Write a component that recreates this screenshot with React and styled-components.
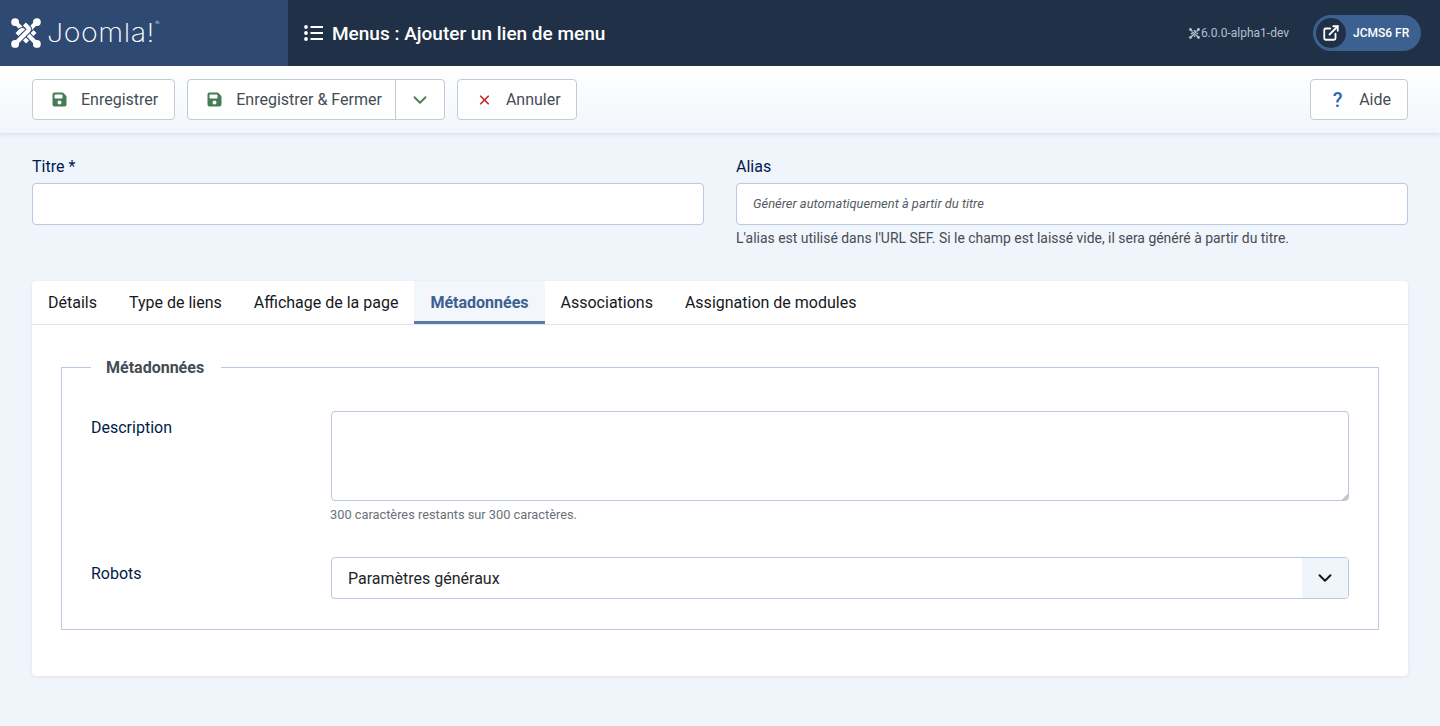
import React from 'react'
import styled, { createGlobalStyle } from 'styled-components'
import { ChevronDown, ExternalLink, X } from 'lucide-react'

const GlobalStyle = createGlobalStyle`
  html, body { margin: 0; padding: 0; }
  body {
    background: #f0f4fb;
    font-family: Roboto, "Liberation Sans", sans-serif;
    color: #22262a;
  }
  * { box-sizing: border-box; }
`

function JoomlaMark({ size = 30, color = '#fff', bg = '#2f4a72' }) {
  const hook = 'M-9.5 -9.5 L2.2 2.2 Q3.7 3.7 5.2 2.2 L9 -1.6'
  const hooks = [0, 90, 180, 270]
  return (
    <svg width={size} height={size} viewBox="0 0 30 30" fill="none">
      <g transform="translate(15 15)">
        {hooks.map((deg) => (
          <g key={deg} transform={`rotate(${deg})`}>
            <path d={hook} stroke={bg} strokeWidth="6.2" />
            <path d={hook} stroke={color} strokeWidth="4.2" />
            <circle cx="-10.9" cy="-10.9" r="3.9" fill={color} />
          </g>
        ))}
      </g>
    </svg>
  )
}

function FloppyIcon({ color }) {
  return (
    <svg width="15" height="15" viewBox="-16 16 480 480" fill={color}>
      <path d="M64 32C29 32 0 61 0 96v320c0 35 29 64 64 64h320c35 0 64-29 64-64V173c0-17-7-33-19-45l-77-77c-12-12-28-19-45-19H64zm0 96c0-18 14-32 32-32h192c18 0 32 14 32 32v64c0 18-14 32-32 32H96c-18 0-32-14-32-32v-64zm160 160a64 64 0 1 1 0 128 64 64 0 1 1 0-128z" />
    </svg>
  )
}

function ListIcon() {
  return (
    <svg width="20" height="16" viewBox="0 0 20 16" fill="#fff" stroke="#fff">
      <circle cx="2" cy="2" r="1.9" stroke="none" />
      <circle cx="2" cy="8" r="1.9" stroke="none" />
      <circle cx="2" cy="14" r="1.9" stroke="none" />
      <path d="M6.5 2H19M6.5 8H19M6.5 14H19" strokeWidth="2" />
    </svg>
  )
}

export default function App() {
  return (
    <>
      <GlobalStyle />
      <Header>
        <LogoBlock>
          <JoomlaMark />
          <LogoText>Joomla!<LogoReg>®</LogoReg></LogoText>
        </LogoBlock>
        <TitleBlock>
          <ListIcon />
          <PageTitle>Menus : Ajouter un lien de menu</PageTitle>
        </TitleBlock>
        <Version>
          <JoomlaMark size={11} color="#b6bfcb" bg="#1f3047" />
          6.0.0-alpha1-dev
        </Version>
        <SitePill>
          <PillCircle>
            <ExternalLink size={18} strokeWidth={2.4} color="#fff" />
          </PillCircle>
          <PillLabel>JCMS6 FR</PillLabel>
        </SitePill>
      </Header>

      <Toolbar>
        <ToolButton>
          <FloppyIcon color="#457d54" />
          Enregistrer
        </ToolButton>
        <SplitButton>
          <SplitMain>
            <FloppyIcon color="#457d54" />
            Enregistrer &amp; Fermer
          </SplitMain>
          <SplitToggle>
            <ChevronDown size={22} strokeWidth={2} color="#457d54" />
          </SplitToggle>
        </SplitButton>
        <CancelButton>
          <CancelIcon>
            <X size={22} strokeWidth={2.8} color="#c52827" />
          </CancelIcon>
          Annuler
        </CancelButton>
        <HelpButton>
          <HelpMark>?</HelpMark>
          Aide
        </HelpButton>
      </Toolbar>

      <Main>
        <TitleRow>
          <Field>
            <FieldLabel>Titre *</FieldLabel>
            <TextInput />
          </Field>
          <Field>
            <FieldLabel>Alias</FieldLabel>
            <TextInput placeholder="Générer automatiquement à partir du titre" />
            <Hint>L'alias est utilisé dans l'URL SEF. Si le champ est laissé vide, il sera généré à partir du titre.</Hint>
          </Field>
        </TitleRow>

        <Card>
          <Tabs>
            <Tab>Détails</Tab>
            <Tab>Type de liens</Tab>
            <Tab>Affichage de la page</Tab>
            <Tab $active>Métadonnées</Tab>
            <Tab>Associations</Tab>
            <Tab>Assignation de modules</Tab>
          </Tabs>
          <CardBody>
            <Fieldset>
              <Legend>Métadonnées</Legend>
              <FormRow>
                <RowLabel>Description</RowLabel>
                <RowControl>
                  <TextArea />
                  <Counter>300 caractères restants sur 300 caractères.</Counter>
                </RowControl>
              </FormRow>
              <FormRow>
                <RowLabel>Robots</RowLabel>
                <RowControl>
                  <SelectBox>
                    <SelectValue>Paramètres généraux</SelectValue>
                    <SelectArrow>
                      <ChevronDown size={22} strokeWidth={2.2} color="#16191d" />
                    </SelectArrow>
                  </SelectBox>
                </RowControl>
              </FormRow>
            </Fieldset>
          </CardBody>
        </Card>
      </Main>
    </>
  )
}

const Header = styled.header`
  display: flex;
  align-items: center;
  height: 66px;
  background: #1f3047;
  padding-right: 19px;
`

const LogoBlock = styled.div`
  display: flex;
  align-items: center;
  gap: 6px;
  width: 288px;
  height: 100%;
  padding-left: 11px;
  background: #2f4a72;
`

const LogoText = styled.span`
  position: relative;
  color: #fff;
  font-family: Inter, Lato, sans-serif;
  font-weight: 200;
  font-size: 26px;
  letter-spacing: 0.5px;
  line-height: 1;
  transform: scaleX(1.1);
  transform-origin: left center;
`

const LogoReg = styled.sup`
  position: absolute;
  top: 0;
  margin-left: 0;
  font-size: 6px;
  letter-spacing: 0;
  line-height: 1;
`

const TitleBlock = styled.div`
  display: flex;
  align-items: center;
  gap: 8px;
  flex: 1;
  padding-left: 16px;
`

const PageTitle = styled.h1`
  margin: 0;
  color: #fff;
  font-size: 19px;
  font-weight: 500;
`

const Version = styled.div`
  display: flex;
  align-items: center;
  gap: 1px;
  margin-right: 24px;
  color: #b6bfcb;
  font-size: 12px;
`

const SitePill = styled.div`
  display: flex;
  align-items: center;
  gap: 7px;
  width: 108px;
  height: 36px;
  padding-left: 3px;
  border-radius: 18px;
  background: #3c6090;
`

const PillCircle = styled.span`
  display: flex;
  align-items: center;
  justify-content: center;
  width: 30px;
  height: 30px;
  border-radius: 50%;
  background: #1f3047;
`

const PillLabel = styled.span`
  color: #fff;
  font-size: 12px;
  font-weight: 500;
`

const Toolbar = styled.div`
  display: flex;
  align-items: center;
  gap: 12px;
  height: 67px;
  padding: 0 32px;
  background: linear-gradient(180deg, #fff 0%, #f2f5fb 100%);
  box-shadow: 0 1px 4px rgba(90, 110, 150, 0.18);
`

const ToolButton = styled.button`
  display: flex;
  align-items: center;
  gap: 14px;
  height: 41px;
  padding: 0 16px 0 19px;
  border: 1px solid #c2cbd8;
  border-radius: 4px;
  background: #fff;
  color: #454c55;
  font-family: inherit;
  font-size: 16px;
`

const CancelButton = styled(ToolButton)`
  padding-right: 15px;
`

const CancelIcon = styled.span`
  display: flex;
  justify-content: center;
  width: 15px;
`

const HelpButton = styled(ToolButton)`
  margin-left: auto;
`

const HelpMark = styled.span`
  width: 15px;
  color: #2a69b8;
  font-size: 20px;
  font-weight: 500;
  line-height: 1;
  text-align: center;
`

const SplitButton = styled.div`
  display: flex;
  height: 41px;
  border: 1px solid #c2cbd8;
  border-radius: 4px;
  background: #fff;
`

const SplitMain = styled(ToolButton)`
  height: 39px;
  border: 0;
  background: transparent;
  padding-right: 13px;
`

const SplitToggle = styled.button`
  display: flex;
  align-items: center;
  justify-content: center;
  width: 49px;
  padding: 0;
  border: 0;
  border-left: 1px solid #c2cbd8;
  background: transparent;
`

const Main = styled.main`
  padding: 24px 32px 50px;
`

const TitleRow = styled.div`
  display: grid;
  grid-template-columns: 1fr 1fr;
  gap: 32px;
  margin-bottom: 34px;
`

const Field = styled.div`
  display: flex;
  flex-direction: column;
`

const FieldLabel = styled.label`
  margin-bottom: 7px;
  color: #001b4c;
  font-size: 16px;
  line-height: 19px;
`

const TextInput = styled.input`
  height: 42px;
  padding: 0 16px 2px;
  border: 1px solid #b8c9e0;
  border-radius: 4px;
  background: #fff;
  font-family: inherit;

  &::placeholder {
    color: #555b63;
    font-size: 12.9px;
    font-style: italic;
    opacity: 1;
  }
`

const Hint = styled.div`
  margin-top: 5px;
  color: #454c55;
  font-size: 13.95px;
  line-height: 17px;
`

const Card = styled.section`
  border-radius: 4px;
  background: #fff;
  box-shadow: 0 1px 3px rgba(90, 110, 150, 0.12);
`

const Tabs = styled.nav`
  display: flex;
  height: 44px;
  border-bottom: 1px solid #dfe6f2;
`

const Tab = styled.button`
  height: 43px;
  padding: 2px 16px 0;
  border: 0;
  border-bottom: 3px solid ${(p) => (p.$active ? '#5a7ba8' : 'transparent')};
  background: ${(p) => (p.$active ? '#f3f6fb' : 'transparent')};
  color: ${(p) => (p.$active ? '#3c6090' : '#16191d')};
  font-family: inherit;
  font-size: 16px;
  font-weight: ${(p) => (p.$active ? 700 : 400)};
`

const CardBody = styled.div`
  padding: 33px 29px 46px;
`

const Fieldset = styled.fieldset`
  margin: 0;
  padding: 34px 29px 30px;
  border: 1px solid #b8c9e0;
`

const Legend = styled.legend`
  margin-left: 0;
  padding: 0 17px 0 15px;
  color: #454c55;
  font-size: 16px;
  font-weight: 700;
`

const FormRow = styled.div`
  display: grid;
  grid-template-columns: 240px 1fr;
  margin-bottom: 34px;

  &:last-child {
    margin-bottom: 0;
  }
`

const RowLabel = styled.label`
  padding-top: 7px;
  color: #001b4c;
  font-size: 16px;
`

const RowControl = styled.div`
  display: flex;
  flex-direction: column;
`

const TextArea = styled.textarea`
  display: block;
  height: 90px;
  border: 1px solid #b8c9e0;
  border-radius: 4px;

  &::-webkit-resizer {
    background: linear-gradient(135deg, transparent 50%, #c4c8ce 50%) no-repeat right bottom / 7px 7px;
  }
`

const Counter = styled.small`
  margin-top: 6px;
  margin-left: -1px;
  color: #6b7178;
  font-size: 12.8px;
  line-height: 16px;
`

const SelectBox = styled.div`
  display: flex;
  align-items: stretch;
  height: 42px;
  border: 1px solid #b8c9e0;
  border-radius: 4px;
  overflow: hidden;
`

const SelectValue = styled.span`
  flex: 1;
  padding-left: 16px;
  color: #22262a;
  font-size: 16px;
  line-height: 42px;
`

const SelectArrow = styled.span`
  display: flex;
  align-items: center;
  justify-content: center;
  width: 46px;
  background: #f0f4fb;
`
